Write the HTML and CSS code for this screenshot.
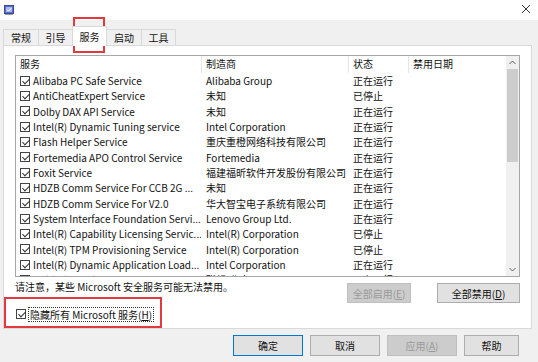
FILE: index.html
```html
<!DOCTYPE html>
<html lang="zh-CN">
<head>
<meta charset="utf-8">
<title>系统配置</title>
<link rel="stylesheet" href="styles.css">
</head>
<body>
<div class="titlebar">
  <svg class="appicon" width="10" height="10" viewBox="0 0 10 10">
    <rect x="0.5" y="0.5" width="9" height="8" fill="#5b6fc9" stroke="#3a4a9a"/>
    <rect x="2" y="2" width="6" height="5" fill="#a9b8f0"/>
    <path d="M3 4.5 L4.5 6 L7.5 3" stroke="#fff" stroke-width="1" fill="none"/>
    <rect x="1" y="9" width="8" height="1" fill="#9a9a9a"/>
  </svg>
  <svg class="close" width="10" height="10" viewBox="0 0 10 10">
    <path d="M1 1 L9 9 M9 1 L1 9" stroke="#333" stroke-width="1"/>
  </svg>
</div>
<div class="main">
  <div class="tabs">
    <div class="tab t1">常规</div>
    <div class="tab t2">引导</div>
    <div class="tab t3 active">服务</div>
    <div class="tab t4">启动</div>
    <div class="tab t5">工具</div>
  </div>
  <div class="panel">
    <div class="list">
      <div class="cols">
        <div class="grid header">
          <div class="c1">服务</div>
          <div class="c2">制造商</div>
          <div class="c3">状态</div>
          <div class="c4">禁用日期</div>
        </div>
        <div class="grid rows">
          <div class="c1"><span class="cb"></span>Alibaba PC Safe Service</div><div class="c2">Alibaba Group</div><div class="c3">正在运行</div><div class="c4"></div>
          <div class="c1"><span class="cb"></span>AntiCheatExpert Service</div><div class="c2">未知</div><div class="c3">已停止</div><div class="c4"></div>
          <div class="c1"><span class="cb"></span>Dolby DAX API Service</div><div class="c2">未知</div><div class="c3">正在运行</div><div class="c4"></div>
          <div class="c1"><span class="cb"></span>Intel(R) Dynamic Tuning service</div><div class="c2">Intel Corporation</div><div class="c3">正在运行</div><div class="c4"></div>
          <div class="c1"><span class="cb"></span>Flash Helper Service</div><div class="c2">重庆重橙网络科技有限公司</div><div class="c3">正在运行</div><div class="c4"></div>
          <div class="c1"><span class="cb"></span>Fortemedia APO Control Service</div><div class="c2">Fortemedia</div><div class="c3">正在运行</div><div class="c4"></div>
          <div class="c1"><span class="cb"></span>Foxit Service</div><div class="c2">福建福昕软件开发股份有限公司</div><div class="c3">正在运行</div><div class="c4"></div>
          <div class="c1"><span class="cb"></span>HDZB Comm Service For CCB 2G ...</div><div class="c2">未知</div><div class="c3">正在运行</div><div class="c4"></div>
          <div class="c1"><span class="cb"></span>HDZB Comm Service For V2.0</div><div class="c2">华大智宝电子系统有限公司</div><div class="c3">正在运行</div><div class="c4"></div>
          <div class="c1"><span class="cb"></span>System Interface Foundation Servi...</div><div class="c2">Lenovo Group Ltd.</div><div class="c3">正在运行</div><div class="c4"></div>
          <div class="c1"><span class="cb"></span>Intel(R) Capability Licensing Servic...</div><div class="c2">Intel(R) Corporation</div><div class="c3">已停止</div><div class="c4"></div>
          <div class="c1"><span class="cb"></span>Intel(R) TPM Provisioning Service</div><div class="c2">Intel(R) Corporation</div><div class="c3">已停止</div><div class="c4"></div>
          <div class="c1"><span class="cb"></span>Intel(R) Dynamic Application Load...</div><div class="c2">Intel Corporation</div><div class="c3">正在运行</div><div class="c4"></div>
          <div class="c1"><span class="cb"></span>NahimicService</div><div class="c2">联想(北京)</div><div class="c3">正在运行</div><div class="c4"></div>
        </div>
      </div>
      <div class="scroll">
        <div class="arrow"><svg width="7" height="5" viewBox="0 0 7 5"><path d="M0.5 4 L3.5 1 L6.5 4" stroke="#606060" fill="none"/></svg></div>
        <div class="track"><div class="thumb"></div></div>
        <div class="arrow"><svg width="7" height="5" viewBox="0 0 7 5"><path d="M0.5 1 L3.5 4 L6.5 1" stroke="#606060" fill="none"/></svg></div>
      </div>
    </div>
    <div class="noterow">
      <div class="note">请注意，某些 Microsoft 安全服务可能无法禁用。</div>
      <div class="btn disabled b-en">全部启用(<u>E</u>)</div>
      <div class="btn b-dis">全部禁用(<u>D</u>)</div>
    </div>
    <div class="hiderow">
      <span class="cb"></span>
      <span class="focus">隐藏所有 Microsoft 服务(<u>H</u>)</span>
    </div>
  </div>
  <div class="footer">
    <div class="btn default w70">确定</div>
    <div class="btn w70">取消</div>
    <div class="btn disabled w70">应用(<u>A</u>)</div>
    <div class="btn w55">帮助</div>
  </div>
</div>
<div class="mark mark-tab"></div>
<div class="mark mark-hide"></div>
</body>
</html>
```

FILE: styles.css
```css
* { box-sizing: border-box; }
html, body { margin: 0; padding: 0; }
body {
  width: 538px;
  height: 362px;
  overflow: hidden;
  position: relative;
  background: #f0f0f0;
  font-family: "Noto Sans CJK SC", "Noto Sans", sans-serif;
  font-size: 10px;
  color: #111;
}
.titlebar {
  height: 20px;
  background: #fff;
  display: flex;
  align-items: center;
  justify-content: space-between;
  padding: 0 7px 0 4px;
}
.appicon { display: block; margin-top: -1px; }
.close { display: block; margin-top: -2px; }

.main { height: 342px; }

.tabs {
  display: flex;
  align-items: flex-end;
  height: 25px;
  padding-left: 3px;
}
.tab {
  height: 16px;
  border: 1px solid #d9d9d9;
  border-bottom: none;
  background: #f0f0f0;
  text-align: center;
  line-height: 15px;
  margin-left: -1px;
}
.tab.t1 { width: 36px; margin-left: 0; }
.tab.t2 { width: 35px; }
.tab.t3 { width: 35px; }
.tab.t4 { width: 36px; }
.tab.t5 { width: 35px; }
.tab.active {
  height: 20px;
  background: #fff;
  margin-bottom: -1px;
  line-height: 20px;
  position: relative;
  z-index: 1;
}

.panel {
  height: 284px;
  margin: 0 6px 0 3px;
  background: #fff;
  border: 1px solid #d9d9d9;
  padding: 9px 11px 0 11px;
}

.list {
  height: 222px;
  border: 1px solid #a6a6a6;
  display: flex;
  overflow: hidden;
}
.cols { flex: 1; overflow: hidden; }
.grid {
  display: grid;
  grid-template-columns: 185px 147px 60px 1fr;
}
.header { height: 17px; line-height: 16px; }
.header > div { padding-left: 4px; }
.header .c2, .header .c3, .header .c4 { border-left: 1px solid #e5e5e5; }
.rows { grid-auto-rows: 15.333px; line-height: 15.333px; }
.rows > div {
  white-space: nowrap;
  overflow: hidden;
  padding-left: 4px;
}
.rows .c1 { display: flex; align-items: center; }
.rows .c2 { padding-left: 5px; }
.rows .c3 { padding-left: 5px; }

.cb {
  display: inline-block;
  flex: none;
  width: 10px;
  height: 10px;
  border: 1px solid #444;
  background: #fff;
  margin-right: 3px;
  position: relative;
}
.cb::after {
  content: "";
  position: absolute;
  left: 2.5px;
  top: 0px;
  width: 3px;
  height: 6px;
  border: solid #333;
  border-width: 0 1px 1px 0;
  transform: rotate(45deg);
}

.scroll {
  width: 13px;
  flex: none;
  background: #f0f0f0;
  display: flex;
  flex-direction: column;
}
.arrow {
  height: 13px;
  display: flex;
  align-items: center;
  justify-content: center;
}
.arrow svg { display: block; }
.track { flex: 1; padding: 0 1px; }
.thumb { height: 93px; background: #cdcdcd; }

.noterow {
  display: flex;
  align-items: flex-start;
  margin-top: 6px;
  height: 20px;
}
.note { flex: 1; line-height: 10px; margin-top: -1px; }

.btn {
  height: 20px;
  border: 1px solid #adadad;
  background: #e1e1e1;
  display: flex;
  align-items: center;
  justify-content: center;
  color: #111;
}
.btn.disabled { background: #cccccc; border-color: #bfbfbf; color: #9a9a9a; }
.btn.default { border-color: #0078d7; }
.b-en { width: 64px; }
.b-dis { width: 83px; margin-left: 26px; }

.hiderow {
  display: flex;
  align-items: center;
  height: 16px;
  margin-top: 3px;
  padding-left: 1px;
}
.hiderow .cb { margin-right: 2px; }
.focus {
  border: 1px dotted #333;
  line-height: 13px;
  padding: 0 1px;
}

.footer {
  display: flex;
  justify-content: flex-end;
  gap: 7px;
  padding-right: 19px;
  margin-top: 6px;
}
.footer .btn { height: 21px; }
.w70 { width: 70px; }
.w55 { width: 55px; }

.mark {
  position: absolute;
  border: 2px solid #e0393e;
  pointer-events: none;
}
.mark-tab { left: 73px; top: 17px; width: 32px; height: 36px; }
.mark-hide { left: 4px; top: 297px; width: 158px; height: 31px; }
```
